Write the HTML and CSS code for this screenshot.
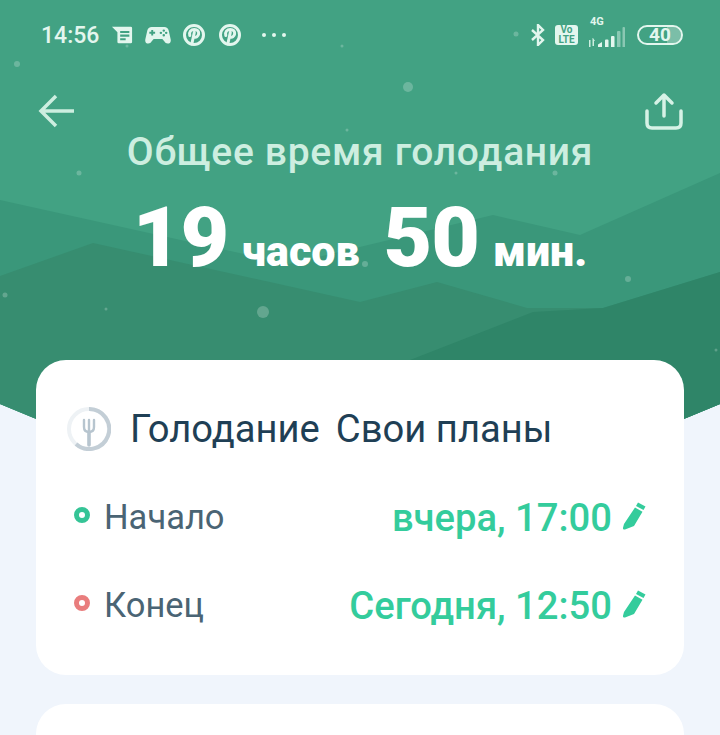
FILE: index.html
```html
<!DOCTYPE html>
<html lang="ru">
<head>
    <meta charset="UTF-8">
    <meta name="viewport" content="width=device-width, initial-scale=1.0">
    <title>Голодание</title>
    <link rel="stylesheet" href="styles.css">
</head>
<body>
    <div class="page">
        <svg class="backdrop" width="720" height="430" viewBox="0 0 720 430">
            <defs>
                <clipPath id="dome">
                    <path d="M0 0H720V404Q360 560 0 404Z"/>
                </clipPath>
            </defs>
            <g clip-path="url(#dome)">
                <rect width="720" height="430" fill="#42a283"/>
                <path fill="#3a977a" d="M0 200L289 264L493 215L580 235L720 173V430H0Z"/>
                <path fill="#378d70" d="M0 276L93 243L360 302L437 282L527 308L603 308L720 272V430H0Z"/>
                <path fill="#2f8568" d="M410 360L533 312L603 308L720 272V430H410Z"/>
                <g fill="#fff" opacity="0.22">
                    <circle cx="408" cy="87" r="5"/>
                    <circle cx="263" cy="312" r="6"/>
                    <circle cx="17" cy="64" r="3"/>
                    <circle cx="5" cy="295" r="2.500"/>
                    <circle cx="79" cy="173" r="2.500"/>
                    <circle cx="456" cy="173" r="1.500"/>
                    <circle cx="365" cy="264" r="3"/>
                    <circle cx="628" cy="279" r="3"/>
                    <circle cx="555" cy="173" r="2.500"/>
                    <circle cx="106" cy="309" r="1.500"/>
                    <circle cx="716" cy="350" r="1.500"/>
                    <circle cx="127" cy="46" r="1.500"/>
                    <circle cx="342" cy="46" r="1.500"/>
                    <circle cx="516" cy="34" r="2.500"/>
                    <circle cx="347" cy="130" r="1.500"/>
                </g>
            </g>
        </svg>

        <header class="hero">
            <div class="status-bar">
                <div class="status-left">
                    <span class="clock">14:56</span>
                    <svg class="ic-news" width="22" height="18" viewBox="0 0 24 22" preserveAspectRatio="none">
                        <path fill="#e3f6ee" fill-rule="evenodd" d="M1 1H21.500A1.500 1.500 0 0 1 23 2.500V19.500A1.500 1.500 0 0 1 21.500 21H8.500A1.500 1.500 0 0 1 7 19.500V7.500ZM10 6V8.500H20V6ZM10 10.500V13H20V10.500ZM10 15V17.500H16V15Z"/>
                    </svg>
                    <svg class="ic-pad" width="26" height="18" viewBox="0 0 27 20" preserveAspectRatio="none">
                        <path fill="#e3f6ee" fill-rule="evenodd" d="M7 1H20C22.500 1 24 2.500 24.600 5L26.700 15C27.200 18 25.400 19.500 23.600 19.500C22 19.500 21 18.500 20 17L18 14.500H9L7 17C6 18.500 5 19.500 3.400 19.500C1.600 19.500 -.2 18 .3 15L2.400 5C3 2.500 4.500 1 7 1ZM6.500 4.500V6.500H4.500V8.500H6.500V10.500H8.500V8.500H10.500V6.500H8.500V4.500ZM19.500 3.800A1.300 1.300 0 1 0 19.500 6.400A1.300 1.300 0 1 0 19.500 3.800ZM16.500 6.300A1.300 1.300 0 1 0 16.500 8.900A1.300 1.300 0 1 0 16.500 6.300ZM22 6.300A1.300 1.300 0 1 0 22 8.900A1.300 1.300 0 1 0 22 6.300ZM19.500 9A1.300 1.300 0 1 0 19.500 11.600A1.300 1.300 0 1 0 19.500 9Z"/>
                    </svg>
                    <svg class="ic-pin" width="22" height="22" viewBox="0 0 22 22">
                        <circle cx="11" cy="11" r="9.500" fill="none" stroke="#e3f6ee" stroke-width="3"/>
                        <path fill="none" stroke="#e3f6ee" stroke-width="3" stroke-linecap="round" d="M6.800 11.500C5.800 8 8 5.500 11.300 5.500C14.500 5.500 16 7.500 15.600 10C15.200 12.500 13 14 11 12.800M11.300 8.500L8.800 20"/>
                    </svg>
                    <svg class="ic-pin" width="22" height="22" viewBox="0 0 22 22">
                        <circle cx="11" cy="11" r="9.500" fill="none" stroke="#e3f6ee" stroke-width="3"/>
                        <path fill="none" stroke="#e3f6ee" stroke-width="3" stroke-linecap="round" d="M6.800 11.500C5.800 8 8 5.500 11.300 5.500C14.500 5.500 16 7.500 15.600 10C15.200 12.500 13 14 11 12.800M11.300 8.500L8.800 20"/>
                    </svg>
                    <span class="more-dots"><i></i><i></i><i></i></span>
                </div>
                <div class="status-right">
                    <svg width="14" height="22" viewBox="0 0 14 22">
                        <path fill="none" stroke="#e3f6ee" stroke-width="2.400" d="M1 6L12 16L7 21V1L12 6L1 16"/>
                    </svg>
                    <div class="volte"><span>Vo</span><span>LTE</span></div>
                    <div class="signal">
                        <span class="net">4G</span>
                        <svg width="38" height="21" viewBox="0 0 38 21">
                            <path fill="#cdeee0" d="M1 14H2.500V21H1ZM5 12L7 15H6V20H4.500V12Z"/>
                            <path fill="#e3f6ee" d="M10 21V18.500L14 16V21ZM17 21V14.500Q17 13.500 18 13.500H19.500Q20.500 13.500 20.500 14.500V21ZM23 21V11Q23 10 24 10H25.500Q26.500 10 26.500 11V21Z"/>
                            <path fill="#e3f6ee" opacity=".45" d="M29 21V6Q29 5 30 5H31.500Q32.500 5 32.500 6V21ZM34.500 21V2Q34.500 1 35.500 1H36Q37 1 37 2V21Z"/>
                        </svg>
                    </div>
                    <div class="battery"><span class="battery-level"></span><span class="battery-num">40</span></div>
                </div>
            </div>

            <nav class="nav-row">
                <svg width="36" height="34" viewBox="0 0 36 34">
                    <path fill="none" stroke="#cdeee0" stroke-width="3.500" d="M36 17H4M18 2L3 17L18 32"/>
                </svg>
                <svg width="38" height="38" viewBox="0 0 38 38">
                    <path fill="none" stroke="#d6f2e6" stroke-width="3.500" stroke-linecap="round" stroke-linejoin="round" d="M19 24V3M11 11L19 3L27 11M2 19V31Q2 36 7 36H31Q36 36 36 31V19"/>
                </svg>
            </nav>

            <h2 class="hero-title">Общее время голодания</h2>
            <div class="hero-time">
                <span class="big">19</span><span class="unit">часов</span>
                <span class="big second">50</span><span class="unit">мин.</span>
            </div>
        </header>

        <section class="card">
            <div class="card-head">
                <svg width="44" height="44" viewBox="0 0 44 44">
                    <circle cx="22" cy="22" r="20" fill="none" stroke="#eef2f5" stroke-width="4"/>
                    <path fill="none" stroke="#c3ced6" stroke-width="4" d="M22 2A20 20 0 1 1 9 37"/>
                    <path fill="none" stroke="#b7c5cf" stroke-width="2.400" stroke-linecap="round" d="M17 13V20Q17 25 22 25Q27 25 27 20V13M22 13V25"/>
                    <path fill="none" stroke="#b7c5cf" stroke-width="3.600" stroke-linecap="round" d="M22 25V38"/>
                </svg>
                <span class="plan-name">Голодание</span>
                <span class="plan-type">Свои планы</span>
            </div>
            <div class="time-row">
                <span class="dot dot-start"></span>
                <span class="time-label">Начало</span>
                <span class="time-value">вчера, 17:00</span>
                <svg class="pencil" width="24" height="28" viewBox="0 0 24 28">
                    <path fill="#34cc9c" d="M16 .5L23.500 4.500L21.500 8L14 4ZM13 5.500L20.500 9.800L12 24L3 27.500C1.500 27.800 .8 27 1 25.800L2 22Z"/>
                </svg>
            </div>
            <div class="time-row">
                <span class="dot dot-end"></span>
                <span class="time-label">Конец</span>
                <span class="time-value">Сегодня, 12:50</span>
                <svg class="pencil" width="24" height="28" viewBox="0 0 24 28">
                    <path fill="#34cc9c" d="M16 .5L23.500 4.500L21.500 8L14 4ZM13 5.500L20.500 9.800L12 24L3 27.500C1.500 27.800 .8 27 1 25.800L2 22Z"/>
                </svg>
            </div>
        </section>

        <section class="card card-next"></section>
    </div>
</body>
</html>
```

FILE: styles.css
```css
html, body {
    margin: 0;
    padding: 0;
}

body {
    font-family: Roboto, "Liberation Sans", sans-serif;
    background-color: #f0f5fc;
}

.page {
    position: relative;
    width: 720px;
    height: 735px;
    overflow: hidden;
}

.backdrop {
    position: absolute;
    top: 0;
    left: 0;
}

.hero {
    position: relative;
    height: 360px;
}

.status-bar {
    display: flex;
    justify-content: space-between;
    align-items: center;
    height: 70px;
    padding: 0 37px 0 41px;
}

.status-left,
.status-right {
    display: flex;
    align-items: center;
}

.clock {
    font-size: 23px;
    font-weight: 500;
    color: #e3f6ee;
    margin-right: 12px;
}

.ic-news {
    margin-right: 12px;
}

.ic-pad {
    margin-right: 12px;
}

.ic-pin {
    margin-right: 14px;
}

.more-dots {
    display: flex;
    gap: 6px;
    margin-left: 7px;
}

.more-dots i {
    width: 4px;
    height: 4px;
    border-radius: 50%;
    background-color: #e3f6ee;
}

.status-right {
    gap: 10px;
}

.volte {
    display: flex;
    flex-direction: column;
    align-items: center;
    width: 23px;
    height: 20px;
    border-radius: 3px;
    background-color: #e3f6ee;
    color: #41a182;
    font-size: 10px;
    font-weight: 700;
    line-height: 10px;
}

.signal {
    position: relative;
    width: 38px;
    height: 22px;
    margin-top: 4px;
}

.net {
    position: absolute;
    top: -11px;
    left: 2px;
    font-size: 11px;
    font-weight: 700;
    color: #e3f6ee;
}

.signal svg {
    display: block;
}

.battery {
    position: relative;
    width: 42px;
    height: 16px;
    margin-left: 1px;
    border: 2px solid #e3f6ee;
    border-radius: 10px;
    text-align: center;
}

.battery-level {
    position: absolute;
    top: 0;
    right: 0;
    width: 14px;
    height: 16px;
    border-radius: 0 8px 8px 0;
    background-color: rgba(255, 255, 255, 0.3);
}

.battery-num {
    position: relative;
    display: block;
    font-size: 19px;
    font-weight: 700;
    line-height: 16px;
    color: #e3f6ee;
}

.nav-row {
    display: flex;
    justify-content: space-between;
    align-items: center;
    height: 40px;
    margin-top: 21px;
    padding: 0 37px 0 38px;
}

.hero-title {
    margin: 0;
    font-size: 39px;
    font-weight: 500;
    letter-spacing: 0.7px;
    line-height: 42px;
    text-align: center;
    color: #cdeee0;
}

.hero-time {
    display: flex;
    justify-content: center;
    align-items: baseline;
    margin-top: 15px;
    color: #fff;
    font-weight: 700;
}

.big {
    font-size: 84px;
    font-weight: 900;
    line-height: 100px;
    letter-spacing: -1px;
}

.second {
    margin-left: 24px;
}

.unit {
    margin-left: 14px;
    font-size: 43px;
    font-weight: 900;
}

.card {
    position: relative;
    margin: 0 36px;
    padding: 47px 38px 26px 31px;
    height: 242px;
    background-color: #fff;
    border-radius: 30px;
}

.card-head {
    display: flex;
    align-items: center;
    margin-bottom: 21px;
}

.plan-name,
.plan-type {
    font-size: 38.2px;
    color: #1f3f55;
}

.plan-name {
    margin-left: 19px;
}

.plan-type {
    margin-left: 16px;
}

.time-row {
    display: flex;
    align-items: center;
    height: 88px;
}

.dot {
    width: 6px;
    height: 6px;
    border: 5px solid;
    border-radius: 50%;
    margin: 0 14px 2px 7px;
}

.dot-start {
    border-color: #35c496;
}

.dot-end {
    border-color: #e97d7d;
}

.time-label {
    flex: 1;
    padding-top: 2px;
    font-size: 34.5px;
    color: #4a6474;
}

.time-value {
    padding-top: 3px;
    font-size: 38.2px;
    font-weight: 500;
    color: #34cc9c;
}

.pencil {
    margin-left: 10px;
}

.card-next {
    height: 60px;
    margin-top: 29px;
    padding: 0;
}
```
